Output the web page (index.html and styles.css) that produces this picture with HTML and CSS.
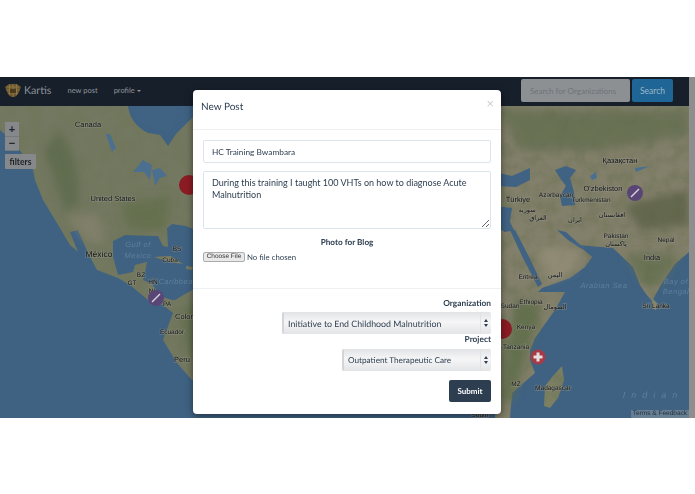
FILE: index.html
```html
<!DOCTYPE html>
<html lang="en">
<head>
    <meta charset="UTF-8">
    <meta name="viewport" content="width=device-width, initial-scale=1.0">
    <title>Kartis</title>
    <link rel="stylesheet" href="styles.css">
</head>
<body>
    <div class="stage">
        <div class="app">
            <nav class="navbar">
                <svg class="logo" viewBox="0 0 16 15">
                    <path d="M0 4 L4 1 L12 1 L16 4 L14 9 Q12 14 8 14 Q4 14 2 9 Z" fill="#6a5630"/>
                    <path d="M2 4 H14 M1.500 7 H14.500 M3 10 H13 M4.500 1.500 V12 M8 1 V14 M11.500 1.500 V12" stroke="#8f7741" stroke-width="1" fill="none"/>
                    <path d="M5 6 H11 V10 H5 Z" fill="#4a3b1d"/>
                </svg>
                <a class="brand">Kartis</a>
                <a class="nav-link">new post</a>
                <a class="nav-link">profile <span class="caret"></span></a>
                <form class="nav-search">
                    <input class="search-input" type="text" placeholder="Search for Organizations">
                    <button class="search-btn" type="button">Search</button>
                </form>
            </nav>

            <div class="map">
                <svg class="map-art" viewBox="0 106 689 312">
                    <defs>
                        <filter id="soft"><feGaussianBlur stdDeviation="0.7"/></filter>
                        <filter id="softer"><feGaussianBlur stdDeviation="4"/></filter>
                        <filter id="label-blur"><feGaussianBlur stdDeviation="0.25"/></filter>
                        <filter id="terrain" x="0" y="0" width="100%" height="100%">
                            <feGaussianBlur in="SourceGraphic" stdDeviation="0.6" result="base"/>
                            <feTurbulence type="fractalNoise" baseFrequency="0.07" numOctaves="4" seed="4"/>
                            <feColorMatrix values="0 0 0 0 0.16  0 0 0 0 0.18  0 0 0 0 0.1  1.6 0 0 0 -0.62"/>
                            <feComposite in2="base" operator="in" result="noise"/>
                            <feMerge>
                                <feMergeNode in="base"/>
                                <feMergeNode in="noise"/>
                            </feMerge>
                        </filter>
                    </defs>
                    <rect x="0" y="106" width="689" height="312" fill="#3f6283"/>

                    <g filter="url(#terrain)">
                        <!-- north america -->
                        <path fill="#737860" d="M0 106 L128 106 Q130 124 148 133 L160 135 L168 146 L176 134 L200 110 L200 232 L186 226 L172 224 L167 228 L168 247 L163 246 L158 236 L125 235 L113 241 L113 257 L118 275 L133 272 L135 265 L147 262 L145 272 L143 280 L152 284 L160 296 L172 300 L175 300 L192 290 L200 288 L200 382 L192 380 L177 363 L163 340 L173 313 L163 305 L148 300 L130 285 L118 278 L97 270 L88 253 L78 230 L70 232 L78 252 L70 245 L60 228 L43 200 L35 180 L33 170 L15 143 L0 130 Z"/>
                        <!-- cuba, hispaniola -->
                        <path fill="#7a7d62" d="M154 257 L170 256 L183 264 L170 262 Z"/>
                        <path fill="#7a7d62" d="M186 266 L193 267 L192 270 L186 269 Z"/>
                        <!-- eurasia + africa -->
                        <path fill="#827f6a" d="M495 106 L689 106 L689 252 L675 264 L662 283 L652 301 L646 294 L640 285 L633 267 L615 250 L613 248 L578 245 L592 257 L585 267 L570 278 L542 288 L538 292 L565 292 L555 310 L535 338 L530 350 L530 360 L535 373 L512 393 L510 418 L495 418 Z"/>
                        <!-- madagascar, sri lanka -->
                        <path fill="#7b7f62" d="M562 366 L564 380 L558 398 L550 408 L544 406 L545 386 L553 376 Z"/>
                        <path fill="#84856a" d="M652 298 L658 304 L656 310 L652 308 Z"/>
                    </g>

                    <g filter="url(#soft)" fill="#3f6283">
                        <!-- hudson bay -->
                        <path d="M128 106 L178 106 L177 118 L168 134 L155 128 L140 122 Z"/>
                        <!-- persian gulf, red sea, mediterranean -->
                        <path d="M557 230 L566 232 L578 243 L590 252 L580 248 L568 240 Z"/>
                        <path d="M510 230 L515 230 L528 255 L542 284 L538 287 L522 256 Z"/>
                        <path d="M495 206 L512 208 L510 222 L514 230 L505 232 L495 226 Z"/>
                        <!-- black sea, caspian -->
                        <path d="M495 172 L512 176 L530 168 L530 180 L516 187 L495 186 Z"/>
                        <path d="M555 170 L566 166 L576 170 L570 178 L574 192 L575 205 L562 206 L560 196 L566 186 L560 178 Z"/>
                    </g>
                    <g filter="url(#soft)" fill="#4b6f8f">
                        <!-- great lakes etc -->
                        <path d="M133 172 L143 160 L152 165 L150 180 L144 172 Z"/>
                        <path d="M152 170 L160 168 L167 176 L160 178 L155 186 Z"/>
                        <path d="M106 134 L110 134 L116 148 L112 152 Z"/>
                        <path d="M590 176 L596 172 L597 178 L592 180 Z"/>
                        <path d="M635 168 L650 166 L636 172 Z"/>
                    </g>

                    <!-- vegetation and relief, blurred patches -->
                    <g filter="url(#softer)">
                        <path fill="#5a6a4a" d="M44 150 L60 130 L75 160 L80 200 L66 214 Z" opacity=".7"/>
                        <path fill="#8b8571" d="M66 215 L100 215 L105 245 L85 240 Z" opacity=".6"/>
                        <path fill="#5f6d4a" d="M120 205 L170 195 L165 230 L130 230 Z" opacity=".7"/>
                        <path fill="#5e6c4a" d="M180 310 L200 300 L200 370 L185 345 Z" opacity=".7"/>
                        <path fill="#97907b" d="M535 245 L580 250 L575 270 L548 282 Z" opacity=".7"/>
                        <path fill="#5c6d48" d="M515 300 L540 305 L530 345 L512 400 L500 400 Z" opacity=".8"/>
                        <path fill="#606c4b" d="M500 110 L689 110 L689 135 L600 150 L520 150 Z" opacity=".7"/>
                        <path fill="#5d6349" d="M625 205 L689 190 L689 225 L640 230 Z" opacity=".8"/>
                        <path fill="#5f6d4b" d="M625 255 L680 255 L660 285 L645 285 Z" opacity=".7"/>
                    </g>

                    <g class="place" filter="url(#label-blur)">
                        <text x="88" y="127">Canada</text>
                        <text x="113" y="201">United States</text>
                        <text class="big" x="99" y="257">México</text>
                        <text class="tiny" x="177" y="251">BS</text>
                        <text class="tiny" x="170" y="262">Cuba</text>
                        <text class="tiny" x="141" y="277">BZ</text>
                        <text class="tiny" x="132" y="285">GT</text>
                        <text class="tiny" x="153" y="284">HN</text>
                        <text class="tiny" x="152" y="293">NI</text>
                        <text class="tiny" x="167" y="306">PA</text>
                        <text class="start" x="175" y="319">Colombia</text>
                        <text class="tiny" x="172" y="334">Ecuador</text>
                        <text x="182" y="362">Perú</text>

                        <text x="620" y="163">Қазақстан</text>
                        <text x="603" y="191">O'zbekiston</text>
                        <text class="tiny" x="591" y="202">Turkmenistan</text>
                        <text class="tiny" x="556" y="197">Azərbaycan</text>
                        <text x="518" y="202">Türkiye</text>
                        <text class="tiny" x="616" y="238">Pakistan</text>
                        <text class="tiny" x="666" y="242">Nepal</text>
                        <text x="652" y="260">India</text>
                        <text class="tiny" x="656" y="308">Sri Lanka</text>
                        <text class="tiny" x="528" y="279">Eritrea</text>
                        <text class="tiny" x="531" y="304">Ethiopia</text>
                        <text class="tiny" x="510" y="308">Sudan</text>
                        <text class="tiny" x="526" y="329">Kenya</text>
                        <text class="tiny" x="516" y="349">Tanzania</text>
                        <text class="tiny" x="516" y="386">MZ</text>
                        <text class="tiny" x="553" y="390">Madagascar</text>
                        <text class="tiny" x="480" y="417">South</text>

                        <text class="tiny" x="575" y="222">ایران</text>
                        <text class="tiny" x="538" y="220">العراق</text>
                        <text class="tiny" x="527" y="212">سورية</text>
                        <text class="tiny" x="612" y="217">افغانستان</text>
                        <text class="tiny" x="616" y="246">پاکستان</text>
                        <text class="tiny" x="555" y="277">اليمن</text>
                        <text class="tiny" x="555" y="309">الصومال</text>
                    </g>

                    <g class="sea">
                        <text x="138" y="247">Gulf of</text>
                        <text x="138" y="258">Mexico</text>
                        <text x="178" y="284">Caribbean</text>
                        <text x="604" y="288">Arabian Sea</text>
                        <text x="676" y="284">Bay of</text>
                        <text x="676" y="294">Bengal</text>
                        <text class="wide" x="653" y="398">Indian</text>
                    </g>

                    <circle cx="189" cy="185" r="10" fill="#8b1c24"/>
                    <circle cx="502" cy="329" r="10" fill="#8b1c24"/>

                    <circle cx="635" cy="193" r="8" fill="#5a4676"/>
                    <path d="M631 197 L639 189" stroke="#d6d3dc" stroke-width="1.500"/>
                    <circle cx="156" cy="298" r="8" fill="#5a4676"/>
                    <path d="M152 302 L160 294" stroke="#d6d3dc" stroke-width="1.500"/>
                    <circle cx="538" cy="357" r="7.500" fill="#a63b47"/>
                    <path d="M538 352.500 V361.500 M533.500 357 H542.500" stroke="#e6dfe0" stroke-width="3"/>
                </svg>

                <div class="map-controls">
                    <div class="zoom-box">
                        <button class="zoom-btn" type="button">+</button>
                        <button class="zoom-btn" type="button">&minus;</button>
                    </div>
                    <button class="filters-btn" type="button">filters</button>
                </div>
                <div class="attribution">Terms &amp; Feedback</div>
            </div>
        </div>
        <div class="scroll-strip"></div>

        <div class="modal">
            <div class="modal-header">
                <h4 class="modal-title">New Post</h4>
                <span class="modal-close">&times;</span>
            </div>
            <form>
                <div class="modal-body">
                    <input class="form-control" type="text" value="HC Training Bwambara">
                    <textarea class="form-control post-text">During this training I taught 100 VHTs on how to diagnose Acute Malnutrition</textarea>
                    <label class="photo-label">Photo for Blog</label>
                    <div class="file-row">
                        <span class="file-btn">Choose File</span>
                        <span class="file-name">No file chosen</span>
                    </div>
                </div>
                <div class="modal-footer">
                    <label class="select-label">Organization</label>
                    <div class="select-box org-select">
                        <span>Initiative to End Childhood Malnutrition</span>
                        <span class="select-arrows"></span>
                    </div>
                    <label class="select-label">Project</label>
                    <div class="select-box project-select">
                        <span>Outpatient Therapeutic Care</span>
                        <span class="select-arrows"></span>
                    </div>
                    <button class="submit-btn" type="button">Submit</button>
                </div>
            </form>
        </div>
    </div>
</body>
</html>
```

FILE: styles.css
```css
body {
    margin: 0;
    background-color: white;
    font-family: Lato, "Open Sans", sans-serif;
    color: #2c3e50;
    text-rendering: geometricPrecision;
}

.stage {
    position: relative;
    display: flex;
    width: 695px;
    height: 341px;
    margin-top: 77px;
}

.app {
    width: 689px;
    display: flex;
    flex-direction: column;
}

.scroll-strip {
    width: 6px;
    background-color: #8e8e8e;
}

.navbar {
    height: 29px;
    box-sizing: border-box;
    flex: none;
    display: flex;
    align-items: center;
    background-color: #171f2b;
    padding: 0 16px 2px 5px;
}

.logo {
    width: 16px;
    height: 15px;
    margin-right: 3px;
}

.brand {
    color: #8d9298;
    font-size: 10.700px;
    margin-right: 16px;
}

.nav-link {
    color: #92969b;
    font-size: 7.500px;
    margin-right: 16px;
}

.caret {
    display: inline-block;
    border-top: 2px solid #92969b;
    border-left: 2px solid transparent;
    border-right: 2px solid transparent;
    vertical-align: middle;
}

.nav-search {
    margin-left: auto;
    display: flex;
    gap: 2px;
}

.search-input {
    width: 109px;
    height: 23px;
    box-sizing: border-box;
    padding: 0 9px;
    border: none;
    border-radius: 2px;
    background-color: #8d9093;
    font-family: inherit;
    font-size: 8px;
}

.search-input::placeholder {
    color: #6e7377;
}

.search-btn {
    width: 41px;
    height: 23px;
    padding: 0;
    border: none;
    border-radius: 2px;
    background-color: #1f6595;
    color: #9db8c9;
    font-family: inherit;
    font-size: 8.500px;
}

.map {
    position: relative;
    flex: 1;
    overflow: hidden;
}

.map-art {
    display: block;
    width: 689px;
    height: 312px;
}

.place text {
    font-family: "Liberation Sans", "DejaVu Sans", sans-serif;
    font-size: 7.500px;
    fill: #15181a;
    text-anchor: middle;
    paint-order: stroke;
    stroke: rgba(150, 150, 135, 0.5);
    stroke-width: 1.500px;
}

.place .big {
    font-size: 8.500px;
}

.place .tiny {
    font-size: 6.500px;
}

.place .start {
    text-anchor: start;
}

.sea text {
    font-family: "Liberation Sans", sans-serif;
    font-size: 7.500px;
    font-style: italic;
    fill: #5f7f9b;
    text-anchor: middle;
    letter-spacing: 0.500px;
}

.sea .wide {
    font-size: 9px;
    letter-spacing: 6px;
}

.map-controls {
    position: absolute;
    left: 5px;
    top: 16px;
}

.zoom-box {
    width: 14px;
    display: flex;
    flex-direction: column;
    margin-bottom: 3px;
}

.zoom-btn {
    width: 14px;
    height: 14.500px;
    padding: 0;
    border: none;
    background-color: #85898c;
    border-bottom: 1px solid #75797c;
    color: #20262b;
    font-family: "Liberation Sans", sans-serif;
    font-size: 11px;
    font-weight: bold;
    line-height: 12px;
}

.filters-btn {
    display: block;
    width: 31px;
    height: 15px;
    padding: 0;
    border: none;
    border-radius: 1px;
    background-color: #85898c;
    color: #1c2125;
    font-family: inherit;
    font-size: 8.500px;
    font-weight: bold;
}

.attribution {
    position: absolute;
    right: 0;
    bottom: 0;
    padding: 0 2px;
    height: 8px;
    background-color: rgba(120, 140, 155, 0.7);
    color: #23303a;
    font-family: "Liberation Sans", sans-serif;
    font-size: 6.500px;
    line-height: 8px;
}

.modal {
    position: absolute;
    left: 193px;
    top: 13px;
    width: 308px;
    height: 324px;
    background-color: white;
    border-radius: 4px;
    box-shadow: 0 2px 7px rgba(0, 0, 0, 0.5);
}

.modal-header {
    height: 40px;
    box-sizing: border-box;
    position: relative;
    padding: 10px 8px 0;
    border-bottom: 1px solid #eef0f2;
}

.modal-title {
    margin: 0;
    font-size: 10px;
    font-weight: normal;
    line-height: 14px;
}

.modal-close {
    position: absolute;
    right: 7px;
    top: 5px;
    color: #c8ccd0;
    font-size: 13px;
    line-height: 16px;
}

.modal-body {
    height: 159px;
    box-sizing: border-box;
    padding: 10px 10px 0;
    border-bottom: 1px solid #eef0f2;
}

.form-control {
    display: block;
    width: 100%;
    height: 23px;
    box-sizing: border-box;
    padding: 0 8px;
    border: 1px solid #dce4ec;
    border-radius: 2px;
    background-color: white;
    color: #2c3e50;
    font-family: inherit;
    font-size: 8.300px;
}

.post-text {
    height: 58px;
    margin-top: 8px;
    padding: 5px 8px;
    font-size: 9px;
    line-height: 11.500px;
    resize: vertical;
    outline: none;
}

.photo-label {
    display: block;
    margin-top: 8px;
    text-align: center;
    font-size: 8.200px;
    font-weight: bold;
    line-height: 11px;
}

.file-row {
    display: flex;
    align-items: center;
    margin-top: 3px;
    gap: 2px;
}

.file-btn {
    width: 42px;
    height: 10px;
    box-sizing: border-box;
    border: 1px solid #a9adb0;
    border-radius: 2px;
    background-color: #e9e9e9;
    font-family: "Liberation Sans", sans-serif;
    font-size: 6.500px;
    line-height: 8px;
    text-align: center;
    color: #333;
}

.file-name {
    font-size: 7.800px;
    line-height: 12px;
}

.modal-footer {
    display: flex;
    flex-direction: column;
    align-items: flex-end;
    padding: 9px 10px 0;
}

.select-label {
    font-size: 8.300px;
    font-weight: bold;
    line-height: 11px;
}

.select-box {
    height: 22px;
    box-sizing: border-box;
    display: flex;
    justify-content: space-between;
    align-items: center;
    padding-left: 4px;
    margin-top: 3px;
    border-left: 2px solid #d3d6d9;
    border-radius: 2px;
    background: linear-gradient(#e2e3e5, #f6f6f7 45%, #e3e4e6);
    font-size: 8.800px;
}

.org-select {
    width: 209px;
}

.project-select {
    width: 149px;
    margin-top: 4px;
    font-size: 8.200px;
}

.select-arrows {
    width: 10px;
    height: 100%;
    border-left: 1px solid #e0e2e4;
    position: relative;
}

.select-arrows::before,
.select-arrows::after {
    content: "";
    position: absolute;
    left: 3px;
    border-left: 2px solid transparent;
    border-right: 2px solid transparent;
}

.select-arrows::before {
    top: 7px;
    border-bottom: 3px solid #2c3e50;
}

.select-arrows::after {
    top: 12px;
    border-top: 3px solid #2c3e50;
}

.submit-btn {
    width: 42px;
    height: 22px;
    margin-top: 9px;
    padding: 0;
    border: none;
    border-radius: 2px;
    background-color: #2c3e50;
    color: white;
    font-family: inherit;
    font-size: 8px;
    font-weight: bold;
}
```
